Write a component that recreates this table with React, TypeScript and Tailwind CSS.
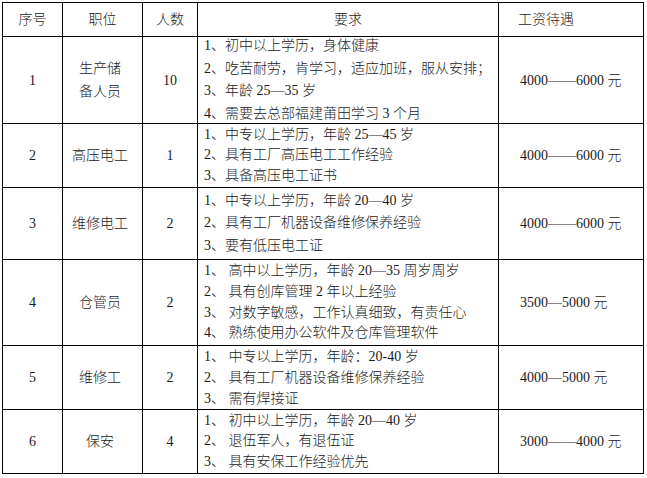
type Job = {
  id: string;
  title: string[];
  count: string;
  reqs: string[];
  salary: string;
  leading: string;
};

const jobs: Job[] = [
  {
    id: '1',
    title: ['生产储', '备人员'],
    count: '10',
    reqs: [
      '1、初中以上学历，身体健康',
      '2、吃苦耐劳，肯学习，适应加班，服从安排；',
      '3、年龄 25—35 岁',
      '4、需要去总部福建莆田学习 3 个月',
    ],
    salary: '4000——6000 元',
    leading: 'leading-[22.5px]',
  },
  {
    id: '2',
    title: ['高压电工'],
    count: '1',
    reqs: ['1、中专以上学历，年龄 25—45 岁', '2、具有工厂高压电工工作经验', '3、具备高压电工证书'],
    salary: '4000——6000 元',
    leading: 'leading-[20.5px]',
  },
  {
    id: '3',
    title: ['维修电工'],
    count: '2',
    reqs: ['1、中专以上学历，年龄 20—40 岁', '2、具有工厂机器设备维修保养经验', '3、要有低压电工证'],
    salary: '4000——6000 元',
    leading: 'leading-[22.5px]',
  },
  {
    id: '4',
    title: ['仓管员'],
    count: '2',
    reqs: [
      '1、 高中以上学历，年龄 20—35 周岁周岁',
      '2、 具有创库管理 2 年以上经验',
      '3、 对数字敏感，工作认真细致，有责任心',
      '4、 熟练使用办公软件及仓库管理软件',
    ],
    salary: '3500—5000 元',
    leading: 'leading-[20.7px]',
  },
  {
    id: '5',
    title: ['维修工'],
    count: '2',
    reqs: ['1、 中专以上学历，年龄：20-40 岁', '2、 具有工厂机器设备维修保养经验', '3、 需有焊接证'],
    salary: '4000—5000 元',
    leading: 'leading-[21px]',
  },
  {
    id: '6',
    title: ['保安'],
    count: '4',
    reqs: ['1、 初中以上学历，年龄 20—40 岁', '2、 退伍军人，有退伍证', '3、 具有安保工作经验优先'],
    salary: '3000——4000 元',
    leading: 'leading-[20.5px]',
  },
];

const cell = 'bg-white flex items-center';

const App = () => {
  return (
    <div
      className="min-h-[478px] bg-white pl-[2px] pt-[2px] text-[14px] font-light text-[#1a1a1a]"
      style={{ fontFamily: '"Liberation Serif", "Noto Sans CJK SC", sans-serif' }}
    >
      <div className="grid w-fit grid-cols-[59px_79px_54px_300px_144px] grid-rows-[33px_86px_63px_71px_85px_63px_63px] gap-px bg-black p-px">
        <div className={`${cell} justify-center`}>序号</div>
        <div className={`${cell} justify-center`}>职位</div>
        <div className={`${cell} justify-center`}>人数</div>
        <div className={`${cell} justify-center`}>要求</div>
        <div className={`${cell} pl-[19px]`}>工资待遇</div>

        {jobs.map((job) => (
          <div key={job.id} className="contents">
            <div className={`${cell} justify-center`}>{job.id}</div>
            <div className={`${cell} justify-center pr-[5px]`}>
              <div className="text-center leading-[23px]">
                {job.title.map((t) => (
                  <div key={t}>{t}</div>
                ))}
              </div>
            </div>
            <div className={`${cell} justify-center`}>{job.count}</div>
            <div className={`${cell} overflow-visible pl-[6px]`}>
              <div className={`${job.leading} whitespace-nowrap`}>
                {job.reqs.map((r) => (
                  <div key={r}>{r}</div>
                ))}
              </div>
            </div>
            <div className={`${cell} pl-[21px]`}>{job.salary}</div>
          </div>
        ))}
      </div>
    </div>
  );
};

export default App;
